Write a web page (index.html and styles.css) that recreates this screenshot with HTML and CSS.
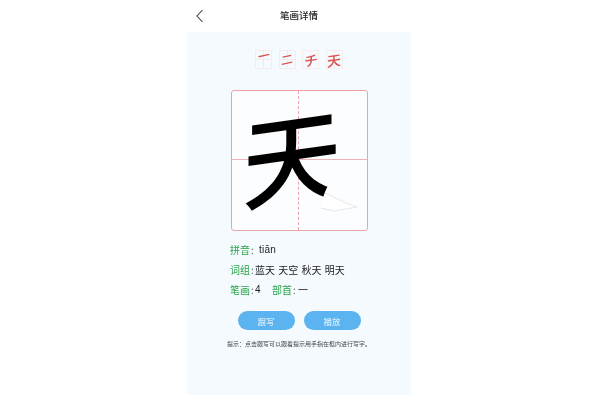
FILE: index.html
```html
<!DOCTYPE html>
<html lang="zh">
<head>
<meta charset="utf-8">
<title>笔画详情</title>
<link rel="stylesheet" href="styles.css">
</head>
<body>
<div class="phone">
  <header class="nav">
    <svg class="back" width="8" height="14" viewBox="0 0 8 14"><path d="M6.5 1 L1 7 L6.5 13" fill="none" stroke="#444" stroke-width="1.1"/></svg>
    <h1 class="title">笔画详情</h1>
  </header>
  <main class="panel">
    <div class="thumbs">
      <span class="thumb"><span class="thumb-ch first">一</span></span>
      <span class="thumb"><span class="thumb-ch second-ch">二</span></span>
      <span class="thumb"><span class="thumb-ch">チ</span></span>
      <span class="thumb"><span class="thumb-ch">天</span></span>
    </div>
    <div class="board">
      <span class="line-v"></span>
      <span class="line-h"></span>
      <span class="glyph">天</span>
      <svg class="tip" width="49" height="45" viewBox="0 0 49 45"><path d="M8 9 L3 23 L3 45 L49 45 L49 0 L12 0 Z" fill="#fbfdff"/><path d="M8 10 L27 19 L40 24 L17 28 L4 25" fill="#fff" stroke="#ddd" stroke-width=".7"/></svg>
    </div>
    <div class="info">
      <p class="row"><span class="label">拼音</span><span class="colon">:</span><span class="py">tiān</span></p>
      <p class="row"><span class="label">词组</span><span class="colon">:</span><span class="words">蓝天 天空 秋天 明天</span></p>
      <p class="row"><span class="label">笔画</span><span class="colon">:</span><span class="num">4</span><span class="label second">部首</span><span class="colon">:</span><span class="rad">一</span></p>
    </div>
    <div class="actions">
      <button class="btn">跟写</button>
      <button class="btn">播放</button>
    </div>
    <p class="hint">提示：点击跟写可以跟着提示用手指在框内进行写字。</p>
  </main>
</div>
</body>
</html>
```

FILE: styles.css
```css
* { box-sizing: border-box; }
html, body { margin: 0; height: 100%; background: #fff; }
body { font-family: "Noto Sans CJK SC", "Noto Sans", sans-serif; color: #222; overflow: hidden; }
.phone { width: 224px; height: 400px; margin: 0 auto 0 187px; display: flex; flex-direction: column; filter: blur(.35px); }
.nav { height: 32px; display: flex; align-items: center; justify-content: center; position: relative; }
.back { position: absolute; left: 9px; top: 9px; }
.title { margin: 0; font-size: 9.5px; font-weight: 500; color: #222; line-height: 1; }
.panel { width: 224px; height: 363px; background: #f5faff; display: flex; flex-direction: column; align-items: center; }
.thumbs { display: flex; gap: 6.5px; margin-top: 18px; }
.thumb { width: 17px; height: 19px; border: 1px solid #f5ecec; background: linear-gradient(#f3ebeb,#f3ebeb) center/1px 100% no-repeat, linear-gradient(#f3ebeb,#f3ebeb) center/100% 1px no-repeat; display: flex; align-items: center; justify-content: center; }
.thumb-ch { font-size: 14px; line-height: 1; color: #d9534f; transform: skewY(-8deg); font-weight: 500; }
.first { transform: translateY(-5px) skewY(-12deg) scaleX(.85); }
.second-ch { transform: translateY(-1px) skewY(-12deg) scale(.85); }
.board { width: 137px; height: 141px; margin-top: 21px; border: 1px solid #eba3a8; border-radius: 3px; background: #fbfdff; position: relative; display: flex; align-items: center; justify-content: center; }
.line-v { position: absolute; left: 66px; top: 0; bottom: 0; border-left: 1px dashed #eda4aa; }
.line-h { position: absolute; left: 0; right: 0; top: 68px; border-top: 1px solid #f0b4b8; }
.glyph { font-size: 100px; font-weight: 500; line-height: 1; color: #000; transform: translate(-7px, -7px) skewY(-8deg); }
.tip { position: absolute; left: 85px; top: 92px; }
.info { align-self: flex-start; margin: 9px 0 0 43px; }
.row { margin: 0; height: 20px; line-height: 20px; font-size: 10px; color: #222; display: flex; }
.label { color: #2aa34a; }
.colon { width: 5px; text-align: center; color: #666; }
.second { margin-left: 11px; }
.num { width: 6px; font-family: "Liberation Sans", sans-serif; }
.rad { margin-left: 1px; }
.py { margin-left: 4px; font-family: "Liberation Sans", sans-serif; letter-spacing: .2px; }
.words { white-space: pre; word-spacing: 1px; }
.actions { display: flex; gap: 9px; margin-top: 11px; }
.btn { width: 57px; height: 19px; border: 0; border-radius: 10px; background: #5bb3f0; color: #d6ecfb; font: 500 8.5px "Noto Sans CJK SC", sans-serif; padding: 0; }
.hint { margin: 9px 0 0; font-size: 6px; line-height: 10px; color: #444; white-space: nowrap; }
```
